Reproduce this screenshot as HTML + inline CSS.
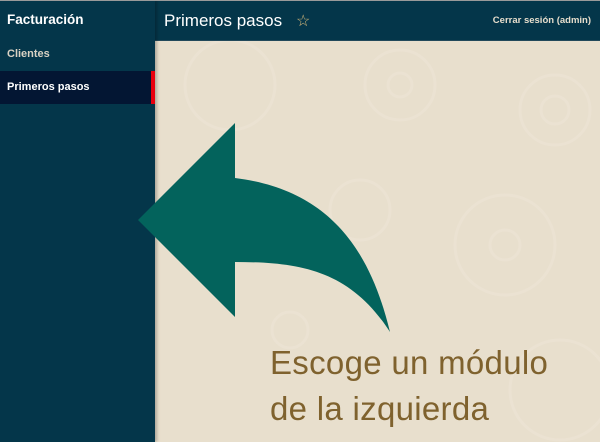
<!DOCTYPE html>
<html><head><meta charset="utf-8"><style>
*{margin:0;padding:0;box-sizing:border-box}
body{width:600px;height:442px;overflow:hidden;font-family:"Liberation Sans",sans-serif;background:#e8dfcd;position:relative}
.top{position:absolute;left:0;top:0;width:600px;height:1px;background:#9a9a9a;z-index:5}
.side{position:absolute;left:0;top:0;width:155px;height:442px;background:#04364a;box-shadow:2px 0 3px rgba(0,0,0,.25);z-index:3}
.side .t{position:absolute;left:7px;top:12px;color:#fff;font-weight:bold;font-size:13.5px}
.side .c{position:absolute;left:7px;top:48px;color:#d9d2c4;font-weight:bold;font-size:11px}
.side .a{position:absolute;left:0;top:71px;width:155px;height:33px;background:#031633}
.side .a span{position:absolute;left:7px;top:10px;color:#fff;font-weight:bold;font-size:11px}
.side .a i{position:absolute;right:0;top:0;width:4px;height:33px;background:#e8000f}
.hdr{position:absolute;left:155px;top:0;width:445px;height:41px;background:#04364a;border-bottom:1px solid #22495a;z-index:2}
.hdr .p{position:absolute;left:9px;top:11px;color:#fff;font-size:17px}
.hdr .s{position:absolute;left:141px;top:11px;color:#d6b97a;font-size:16px}
.hdr .r{position:absolute;right:9px;top:15px;color:#e6ddcc;font-weight:bold;font-size:9.5px}
.msg{position:absolute;left:270px;top:340px;color:#7f622e;font-size:33px;line-height:46px;letter-spacing:0.3px}
svg{position:absolute;left:0;top:0}
</style></head><body>
<div class="top"></div>
<svg width="600" height="442">
<g fill="none" stroke="#ebe2d2" stroke-width="3">
<circle cx="400" cy="85" r="35"/><circle cx="400" cy="85" r="12"/>
<circle cx="555" cy="110" r="35"/><circle cx="555" cy="110" r="14"/>
<circle cx="230" cy="85" r="45"/>
<circle cx="505" cy="245" r="50"/><circle cx="505" cy="245" r="15"/>
<circle cx="360" cy="210" r="30"/>
<circle cx="290" cy="330" r="18"/>
<circle cx="560" cy="390" r="50"/>
</g>
</svg>
<div class="side"><div class="t">Facturación</div><div class="c">Clientes</div><div class="a"><span>Primeros pasos</span><i></i></div></div>
<div class="hdr"><div class="p">Primeros pasos</div><div class="s">☆</div><div class="r">Cerrar sesión (admin)</div></div>
<svg width="600" height="442" style="z-index:4">
<path d="M138,220 L235,123 L235,178 C330,190 370,250 390,332 C350,270 300,262 235,262 L235,317 Z" fill="#03635c"/>
</svg>
<div class="msg">Escoge un módulo<br>de la izquierda</div>
</body></html>
